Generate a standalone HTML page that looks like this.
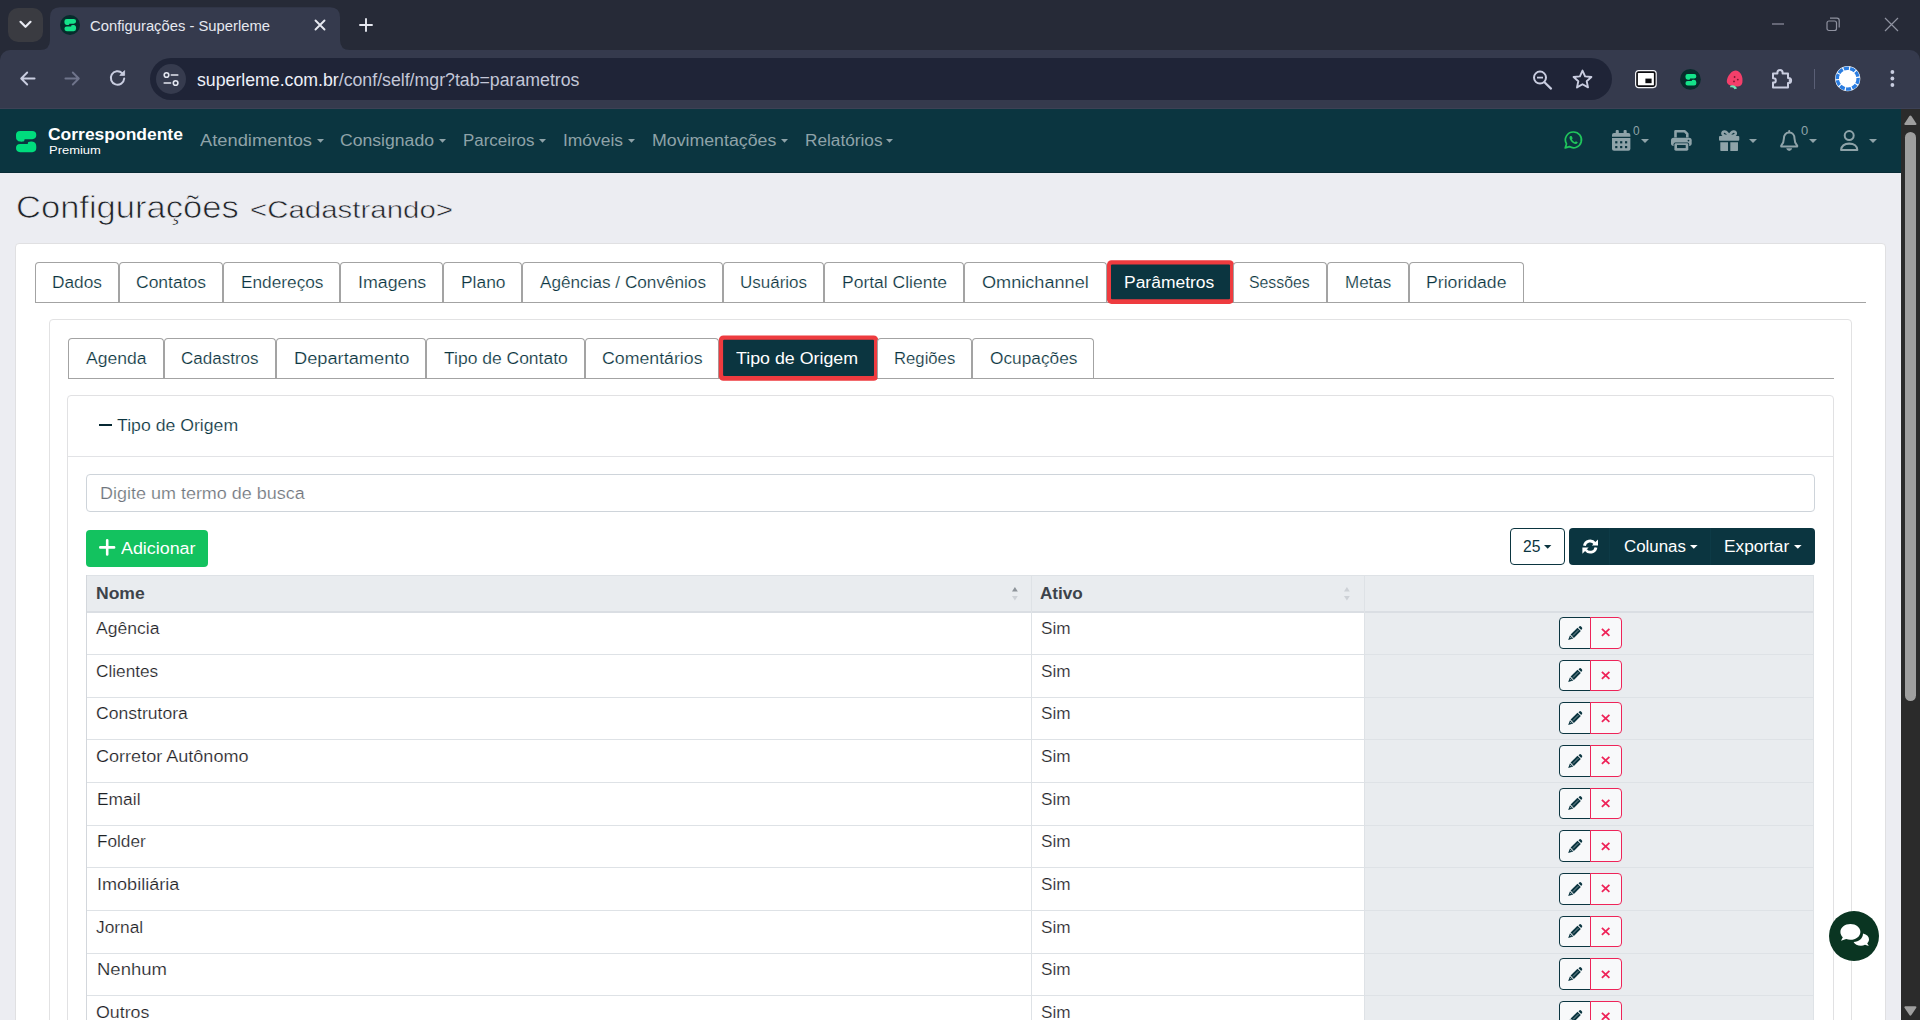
<!DOCTYPE html>
<html lang="pt-br"><head><meta charset="utf-8"><title>Configurações - Superleme</title>
<style>
*{box-sizing:border-box;margin:0;padding:0}
html,body{width:1920px;height:1020px;overflow:hidden;background:#ecedf2;font-family:"Liberation Sans",sans-serif;}
#root{position:relative;width:1920px;height:1020px;overflow:hidden}
.t{position:absolute;white-space:nowrap;line-height:1;transform-origin:0 0;display:block}
.a{position:absolute;display:block;overflow:visible}
</style></head>
<body><div id="root">
<div style="position:absolute;left:0px;top:0px;width:1920px;height:64px;background:#262a37"></div>
<div style="position:absolute;left:8px;top:8px;width:35px;height:34px;background:#3a3b41;border-radius:10px"></div>
<svg class="a" style="left:19px;top:20px" width="13" height="9" viewBox="0 0 13 9"><path d="M1.5 1.8 L6.5 6.8 L11.5 1.8" fill="none" stroke="#e8eaf2" stroke-width="2.2" stroke-linecap="round" stroke-linejoin="round"/></svg>
<div style="position:absolute;left:0px;top:50px;width:1920px;height:59px;background:#353a4d;border-radius:10px 10px 0 0"></div>
<div style="position:absolute;left:0px;top:108px;width:1920px;height:1px;background:#3d4256"></div>
<svg class="a" style="left:40px;top:7px" width="310" height="43" viewBox="0 0 310 43"><path d="M0 43 Q10 43 10 33 V10.3 Q10 0.3 20 0.3 H290 Q300 0.3 300 10.3 V33 Q300 43 310 43 Z" fill="#353a4d"/></svg>
<svg class="a" style="left:60px;top:15px" width="20" height="20" viewBox="0 0 20 20"><circle cx="10" cy="10" r="10" fill="#062c2c"/></svg>
<svg class="a" style="left:63.9px;top:19.1px" width="12.5" height="12.2" viewBox="0 0 20.3 21.2"><path d="M4.1 0 H16.2 A4.1 4.1 0 0 1 16.2 8.2 H8.6 L8.1 10.2 Q6.2 10.8 4.4 10.6 A5 5 0 0 1 0 5.4 V4.1 A4.1 4.1 0 0 1 4.1 0 Z" fill="#14e38a"/><path d="M4.1 0 H16.2 A4.1 4.1 0 0 1 16.2 8.2 H8.6 L8.1 10.2 Q6.2 10.8 4.4 10.6 A5 5 0 0 1 0 5.4 V4.1 A4.1 4.1 0 0 1 4.1 0 Z" fill="#14e38a" transform="rotate(180 10.15 10.6)"/></svg>
<span class="t " style="left:90.00px;top:18.00px;font-size:15.5px;color:#e6e8f0;transform:scaleX(0.9540)">Configurações - Superleme</span>
<svg class="a" style="left:314px;top:19px" width="12" height="12" viewBox="0 0 12 12"><path d="M1.5 1.5 L10.5 10.5 M10.5 1.5 L1.5 10.5" stroke="#e6e8f0" stroke-width="1.9" stroke-linecap="round"/></svg>
<svg class="a" style="left:359px;top:18px" width="14" height="14" viewBox="0 0 14 14"><path d="M7 1 V13 M1 7 H13" stroke="#e6e8f0" stroke-width="1.9" stroke-linecap="round"/></svg>
<svg class="a" style="left:1772px;top:23px" width="13" height="2" viewBox="0 0 13 2"><path d="M0 1 H12" stroke="#8f92a0" stroke-width="1.2"/></svg>
<svg class="a" style="left:1826px;top:17px" width="15" height="15" viewBox="0 0 15 15"><rect x="1" y="4" width="9.5" height="9.5" rx="2" fill="none" stroke="#8f92a0" stroke-width="1.2"/><path d="M4 1.2 H11 Q13.2 1.2 13.2 3.4 V10.5" fill="none" stroke="#8f92a0" stroke-width="1.2"/></svg>
<svg class="a" style="left:1884px;top:17px" width="15" height="15" viewBox="0 0 15 15"><path d="M1 1 L14 14 M14 1 L1 14" stroke="#8f92a0" stroke-width="1.2"/></svg>
<svg class="a" style="left:18px;top:69px" width="20" height="20" viewBox="0 0 20 20"><path d="M16.6 9.5 H3.4 M9.2 3.5 L3.2 9.5 L9.2 15.5" fill="none" stroke="#c9cde0" stroke-width="1.9" stroke-linecap="round" stroke-linejoin="round"/></svg>
<svg class="a" style="left:62px;top:69px" width="20" height="20" viewBox="0 0 20 20"><path d="M3.4 9.5 H16.6 M10.8 3.5 L16.8 9.5 L10.8 15.5" fill="none" stroke="#6f748b" stroke-width="1.9" stroke-linecap="round" stroke-linejoin="round"/></svg>
<svg class="a" style="left:108px;top:68px" width="20" height="20" viewBox="0 0 20 20"><path d="M16.2 10.5 A6.7 6.7 0 1 1 14.2 5.2" fill="none" stroke="#c9cde0" stroke-width="2" stroke-linecap="round"/><path d="M16.6 2.6 V7.4 H11.8 Z" fill="#c9cde0" stroke="#c9cde0" stroke-width="0.8" stroke-linejoin="round"/></svg>
<div style="position:absolute;left:150px;top:58px;width:1462px;height:42px;background:#1f2437;border-radius:21px"></div>
<div style="position:absolute;left:156px;top:64px;width:30px;height:30px;background:#363b4e;border-radius:15px"></div>
<svg class="a" style="left:161px;top:69px" width="20" height="20" viewBox="0 0 20 20"><circle cx="5.5" cy="6" r="2.3" fill="none" stroke="#e3e6f0" stroke-width="1.6"/><path d="M10.3 6 H16.8" stroke="#e3e6f0" stroke-width="1.6" stroke-linecap="round"/><circle cx="14.6" cy="14" r="2.3" fill="none" stroke="#e3e6f0" stroke-width="1.6"/><path d="M3.2 14 H9.6" stroke="#e3e6f0" stroke-width="1.6" stroke-linecap="round"/></svg>
<span class="t " style="left:196.90px;top:71.00px;font-size:18px;color:#eef0f7;transform:scaleX(0.9839)">superleme.com.br<span style="color:#c3c7d8">/conf/self/mgr?tab=parametros</span></span>
<svg class="a" style="left:1531px;top:69px" width="22" height="22" viewBox="0 0 22 22"><circle cx="9" cy="8.6" r="6" fill="none" stroke="#c9cde0" stroke-width="2"/><path d="M13.5 13.2 L20 19.6" stroke="#c9cde0" stroke-width="2.2" stroke-linecap="round"/><path d="M6 8.6 H12" stroke="#c9cde0" stroke-width="1.8"/></svg>
<svg class="a" style="left:1572px;top:69px" width="21" height="20" viewBox="0 0 21 20"><path d="M10.5 1.6 L13.1 7.4 L19.4 8 L14.7 12.2 L16 18.4 L10.5 15.2 L5 18.4 L6.3 12.2 L1.6 8 L7.9 7.4 Z" fill="none" stroke="#c9cde0" stroke-width="1.9" stroke-linejoin="round"/></svg>
<svg class="a" style="left:1634.6px;top:70.2px" width="22" height="18.4" viewBox="0 0 22 18.4"><rect x="0.6" y="0.6" width="20.6" height="17" rx="3" fill="#0c0c10" stroke="#f2f2f6" stroke-width="1.2"/><rect x="2.9" y="2.9" width="16" height="12.4" rx="0.6" fill="#ffffff"/><rect x="10.4" y="8.6" width="6.2" height="4.6" fill="#0c0c10"/></svg>
<svg class="a" style="left:1680px;top:68.6px" width="21" height="21" viewBox="0 0 21 21"><circle cx="10.4" cy="10.4" r="10.4" fill="#072b2b"/></svg>
<svg class="a" style="left:1684.6px;top:73.8px" width="11.8" height="11.4" viewBox="0 0 20.3 21.2"><path d="M4.1 0 H16.2 A4.1 4.1 0 0 1 16.2 8.2 H8.6 L8.1 10.2 Q6.2 10.8 4.4 10.6 A5 5 0 0 1 0 5.4 V4.1 A4.1 4.1 0 0 1 4.1 0 Z" fill="#14e38a"/><path d="M4.1 0 H16.2 A4.1 4.1 0 0 1 16.2 8.2 H8.6 L8.1 10.2 Q6.2 10.8 4.4 10.6 A5 5 0 0 1 0 5.4 V4.1 A4.1 4.1 0 0 1 4.1 0 Z" fill="#14e38a" transform="rotate(180 10.15 10.6)"/></svg>
<svg class="a" style="left:1726px;top:69.5px" width="18" height="20" viewBox="0 0 18 20"><path d="M10 0.6 C15 1.5 17.2 7 16.4 12.4 C16 15.6 13.6 16.6 11 16.4 L4.6 15.4 C1.2 14.6 0.2 12 1.2 9 C2.6 4.8 6 0.4 10 0.6 Z" fill="#f43f6a"/><path d="M4 16 C6 14.6 9.6 15 11 18.6 L8.4 19.2 C8 17.6 6.4 16.8 4.6 17.4 Z" fill="#6ee7b7"/><circle cx="8.6" cy="7" r="0.9" fill="#7a1730"/><circle cx="11.8" cy="9.6" r="0.9" fill="#7a1730"/><circle cx="8" cy="11.4" r="0.9" fill="#7a1730"/></svg>
<svg class="a" style="left:1771px;top:68px" width="22" height="21" viewBox="0 0 22 21"><path d="M2 5.6 H6.4 V4.6 A2.6 2.6 0 0 1 11.6 4.6 V5.6 H17 V10 H17.6 A2.5 2.5 0 0 1 17.6 15 H17 V19.4 H2 V14.6 H2.6 A2.2 2.2 0 0 0 2.6 10.2 H2 Z" fill="none" stroke="#c9cde0" stroke-width="2" stroke-linejoin="round"/><path d="M17.8 10.4 Q20.8 12.5 17.8 14.6 Z" fill="#c9cde0"/></svg>
<div style="position:absolute;left:1813.5px;top:69px;width:1.2px;height:19.5px;background:#5a5f76"></div>
<svg class="a" style="left:1834.5px;top:65.8px" width="26" height="26" viewBox="0 0 26 26"><circle cx="12.7" cy="12.7" r="12.6" fill="#ffffff"/><circle cx="12.7" cy="12.7" r="10.4" fill="none" stroke="#2a7de1" stroke-width="3.4" stroke-dasharray="5.2 1.2"/><circle cx="12.7" cy="12.7" r="8.2" fill="#ffffff"/></svg>
<svg class="a" style="left:1889px;top:69px" width="7" height="19" viewBox="0 0 7 19"><circle cx="3.4" cy="3" r="1.9" fill="#c9cde0"/><circle cx="3.4" cy="9.5" r="1.9" fill="#c9cde0"/><circle cx="3.4" cy="16" r="1.9" fill="#c9cde0"/></svg>
<div style="position:absolute;left:0px;top:109px;width:1901px;height:64px;background:#0b3540"></div>
<div style="position:absolute;left:0px;top:172px;width:1901px;height:1px;background:#082c36"></div>
<svg class="a" style="left:15.9px;top:130.8px" width="20.3" height="21.2" viewBox="0 0 20.3 21.2"><path d="M4.1 0 H16.2 A4.1 4.1 0 0 1 16.2 8.2 H8.6 L8.1 10.2 Q6.2 10.8 4.4 10.6 A5 5 0 0 1 0 5.4 V4.1 A4.1 4.1 0 0 1 4.1 0 Z" fill="#00dc7d"/><path d="M4.1 0 H16.2 A4.1 4.1 0 0 1 16.2 8.2 H8.6 L8.1 10.2 Q6.2 10.8 4.4 10.6 A5 5 0 0 1 0 5.4 V4.1 A4.1 4.1 0 0 1 4.1 0 Z" fill="#00dc7d" transform="rotate(180 10.15 10.6)"/></svg>
<span class="t " style="left:48.30px;top:126.00px;font-size:17px;color:#ffffff;font-weight:700;transform:scaleX(1.0275)">Correspondente</span>
<span class="t " style="left:48.50px;top:145.00px;font-size:10.8px;color:#ffffff;transform:scaleX(1.1989)">Premium</span>
<span class="t " style="left:200.00px;top:133.00px;font-size:16px;color:#8fa3a9;transform:scaleX(1.1447)">Atendimentos</span>
<svg class="a" style="left:317px;top:139.3px" width="7" height="3.7" viewBox="0 0 7 3.7"><path d="M0 0H7L3.5 3.7Z" fill="#8fa3a9"/></svg>
<span class="t " style="left:340.00px;top:133.00px;font-size:16px;color:#8fa3a9;transform:scaleX(1.1007)">Consignado</span>
<svg class="a" style="left:438.75px;top:139.3px" width="7" height="3.7" viewBox="0 0 7 3.7"><path d="M0 0H7L3.5 3.7Z" fill="#8fa3a9"/></svg>
<span class="t " style="left:463.00px;top:133.00px;font-size:16px;color:#8fa3a9;transform:scaleX(1.0581)">Parceiros</span>
<svg class="a" style="left:538.75px;top:139.3px" width="7" height="3.7" viewBox="0 0 7 3.7"><path d="M0 0H7L3.5 3.7Z" fill="#8fa3a9"/></svg>
<span class="t " style="left:563.00px;top:133.00px;font-size:16px;color:#8fa3a9;transform:scaleX(1.0884)">Imóveis</span>
<svg class="a" style="left:627.5px;top:139.3px" width="7" height="3.7" viewBox="0 0 7 3.7"><path d="M0 0H7L3.5 3.7Z" fill="#8fa3a9"/></svg>
<span class="t " style="left:651.75px;top:133.00px;font-size:16px;color:#8fa3a9;transform:scaleX(1.1089)">Movimentações</span>
<svg class="a" style="left:780.5px;top:139.3px" width="7" height="3.7" viewBox="0 0 7 3.7"><path d="M0 0H7L3.5 3.7Z" fill="#8fa3a9"/></svg>
<span class="t " style="left:804.50px;top:133.00px;font-size:16px;color:#8fa3a9;transform:scaleX(1.0759)">Relatórios</span>
<svg class="a" style="left:886px;top:139.3px" width="7" height="3.7" viewBox="0 0 7 3.7"><path d="M0 0H7L3.5 3.7Z" fill="#8fa3a9"/></svg>
<svg class="a" style="left:1564px;top:131.4px" width="18.4" height="18.2" viewBox="0 0 18.4 18.2"><path d="M9.5 1 A7.9 7.9 0 1 1 5.4 15.6 L1.2 16.9 L2.5 12.9 A7.9 7.9 0 0 1 9.5 1 Z" fill="none" stroke="#20c65c" stroke-width="1.7" stroke-linejoin="round"/><path d="M6.3 4.9 C5.2 5.6 5.2 7.4 6.6 9.4 C8 11.5 10.2 13 11.9 12.9 C13 12.8 13.8 12 13.7 11.3 L11.9 10.3 L10.9 11.2 C9.7 10.8 8.4 9.5 7.9 8.3 L8.7 7.3 L7.6 5 Z" fill="#20c65c"/></svg>
<svg class="a" style="left:1612px;top:130.2px" width="18.4" height="20.7" viewBox="0 0 18.4 20.7"><rect x="3.7" y="0" width="3.1" height="4.2" rx="1" fill="#8fa3a9"/><rect x="11.6" y="0" width="3.1" height="4.2" rx="1" fill="#8fa3a9"/><path d="M0 6.7 V5.1 Q0 3.1 2 3.1 H16.4 Q18.4 3.1 18.4 5.1 V6.7 Z" fill="#8fa3a9"/><path d="M0 7.9 H18.4 V18.7 Q18.4 20.7 16.4 20.7 H2 Q0 20.7 0 18.7 Z" fill="#8fa3a9"/><rect x="3.2" y="11.2" width="2.2" height="2.2" fill="#0b3540"/><rect x="3.2" y="16" width="2.2" height="2.2" fill="#0b3540"/><rect x="8.1" y="11.2" width="2.2" height="2.2" fill="#0b3540"/><rect x="8.1" y="16" width="2.2" height="2.2" fill="#0b3540"/><rect x="13" y="11.2" width="2.2" height="2.2" fill="#0b3540"/><rect x="13" y="16" width="2.2" height="2.2" fill="#0b3540"/></svg>
<span class="t " style="left:1633.20px;top:125.00px;font-size:12px;color:#8fa3a9;transform:scaleX(0.9892)">0</span>
<svg class="a" style="left:1641px;top:139px" width="8" height="4" viewBox="0 0 8 4"><path d="M0 0H8L4.0 4Z" fill="#8fa3a9"/></svg>
<svg class="a" style="left:1670.6px;top:130.2px" width="20.7" height="20.7" viewBox="0 0 20.7 20.7"><path d="M4.5 7.4 V1.3 H13.8 L16.3 3.8 V7.4" fill="none" stroke="#8fa3a9" stroke-width="2.6" stroke-linejoin="round"/><rect x="0" y="7.7" width="20.7" height="8.2" rx="2.6" fill="#8fa3a9"/><rect x="2.6" y="12.6" width="15.5" height="8.1" rx="1.6" fill="#0b3540"/><rect x="3.4" y="13.3" width="13.9" height="7.4" rx="1.4" fill="#8fa3a9"/><rect x="6" y="15" width="8.7" height="3.1" fill="#0b3540"/><circle cx="17.5" cy="10.6" r="0.9" fill="#0b3540"/></svg>
<svg class="a" style="left:1718.9px;top:129.8px" width="20.3" height="21.1" viewBox="0 0 20.3 21.1"><path d="M10.1 6.2 C7.8 0.2 3 0.6 3.4 3.8 C3.7 5.8 6.6 6.2 10.1 6.2 C13.6 6.2 16.5 5.8 16.8 3.8 C17.2 0.6 12.4 0.2 10.1 6.2 Z" fill="none" stroke="#8fa3a9" stroke-width="2.5" stroke-linejoin="round"/><rect x="0" y="6.1" width="20.3" height="4.7" rx="1" fill="#8fa3a9"/><path d="M1.3 12.2 H9 V21.1 H2.5 Q1.3 21.1 1.3 19.9 Z" fill="#8fa3a9"/><path d="M11.3 12.2 H19 V19.9 Q19 21.1 17.8 21.1 H11.3 Z" fill="#8fa3a9"/></svg>
<svg class="a" style="left:1749px;top:139px" width="8" height="4" viewBox="0 0 8 4"><path d="M0 0H8L4.0 4Z" fill="#8fa3a9"/></svg>
<svg class="a" style="left:1780px;top:129.8px" width="18.4" height="21.2" viewBox="0 0 18.4 21.2"><path d="M9.2 1 V2.6 M9.2 2.6 C5.6 2.6 3.9 5.4 3.9 8.4 C3.9 12.4 2.6 14 1.2 15.6 V16.6 H17.2 V15.6 C15.8 14 14.5 12.4 14.5 8.4 C14.5 5.4 12.8 2.6 9.2 2.6 Z" fill="none" stroke="#8fa3a9" stroke-width="2" stroke-linejoin="round" stroke-linecap="round"/><path d="M6.2 18.3 H12.2 Q11.6 21 9.2 21 Q6.8 21 6.2 18.3 Z" fill="#8fa3a9"/></svg>
<span class="t " style="left:1800.90px;top:125.00px;font-size:12px;color:#8fa3a9;transform:scaleX(1.0791)">0</span>
<svg class="a" style="left:1809px;top:139px" width="8" height="4" viewBox="0 0 8 4"><path d="M0 0H8L4.0 4Z" fill="#8fa3a9"/></svg>
<svg class="a" style="left:1840px;top:129.8px" width="18.4" height="21.1" viewBox="0 0 18.4 21.1"><circle cx="9.2" cy="5.6" r="4.5" fill="none" stroke="#8fa3a9" stroke-width="2"/><path d="M1.1 20 C1.1 16 4.4 13.6 9.2 13.6 C14 13.6 17.3 16 17.3 20 Z" fill="none" stroke="#8fa3a9" stroke-width="2.1" stroke-linejoin="round"/></svg>
<svg class="a" style="left:1869px;top:139px" width="8" height="4" viewBox="0 0 8 4"><path d="M0 0H8L4.0 4Z" fill="#8fa3a9"/></svg>
<div style="position:absolute;left:1901px;top:109px;width:19px;height:911px;background:#2b2b2b"></div>
<svg class="a" style="left:1904px;top:114.6px" width="13" height="10.2" viewBox="0 0 13 10.2"><path d="M6.4 0.5 Q6.9 0.5 7.4 1.1 L12.3 8.4 Q12.9 10 11.4 10 H1.4 Q-0.1 10 0.5 8.4 L5.4 1.1 Q5.9 0.5 6.4 0.5 Z" fill="#9f9f9f"/></svg>
<div style="position:absolute;left:1905px;top:131.7px;width:11px;height:569.6px;background:#9f9f9f;border-radius:5.5px"></div>
<svg class="a" style="left:1904px;top:1006.1px" width="13" height="10.2" viewBox="0 0 13 10.2"><path d="M6.4 9.7 Q6.9 9.7 7.4 9.1 L12.3 1.8 Q12.9 0.2 11.4 0.2 H1.4 Q-0.1 0.2 0.5 1.8 L5.4 9.1 Q5.9 9.7 6.4 9.7 Z" fill="#9f9f9f"/></svg>
<span class="t " style="left:16.30px;top:192.00px;font-size:31.5px;color:#1f2328;-webkit-text-stroke:0.75px #ecedf2;transform:scaleX(1.0964)">Configurações</span>
<span class="t " style="left:250.00px;top:199.00px;font-size:23.6px;color:#1f2328;-webkit-text-stroke:0.5px #ecedf2;transform:scaleX(1.2477)">&lt;Cadastrando&gt;</span>
<div style="position:absolute;left:15px;top:243px;width:1871px;height:800px;background:#fff;border:1px solid #e0e0e2;border-radius:4px"></div>
<div style="position:absolute;left:35px;top:302px;width:1831px;height:1px;background:#a3a3a3"></div>
<div style="position:absolute;left:35px;top:262px;width:84px;height:40px;border:1px solid #a3a3a3;border-bottom:none;border-radius:4px 4px 0 0;background:#fff"></div>
<span class="t " style="left:52.00px;top:275.00px;font-size:16px;color:#0b3540;-webkit-text-stroke:0.2px #fff;transform:scaleX(1.0811)">Dados</span>
<div style="position:absolute;left:119px;top:262px;width:104px;height:40px;border:1px solid #a3a3a3;border-bottom:none;border-radius:4px 4px 0 0;background:#fff"></div>
<span class="t " style="left:136.00px;top:275.00px;font-size:16px;color:#0b3540;-webkit-text-stroke:0.2px #fff;transform:scaleX(1.0931)">Contatos</span>
<div style="position:absolute;left:223px;top:262px;width:117px;height:40px;border:1px solid #a3a3a3;border-bottom:none;border-radius:4px 4px 0 0;background:#fff"></div>
<span class="t " style="left:240.50px;top:275.00px;font-size:16px;color:#0b3540;-webkit-text-stroke:0.2px #fff;transform:scaleX(1.0785)">Endereços</span>
<div style="position:absolute;left:340px;top:262px;width:103px;height:40px;border:1px solid #a3a3a3;border-bottom:none;border-radius:4px 4px 0 0;background:#fff"></div>
<span class="t " style="left:357.50px;top:275.00px;font-size:16px;color:#0b3540;-webkit-text-stroke:0.2px #fff;transform:scaleX(1.1121)">Imagens</span>
<div style="position:absolute;left:443px;top:262px;width:79px;height:40px;border:1px solid #a3a3a3;border-bottom:none;border-radius:4px 4px 0 0;background:#fff"></div>
<span class="t " style="left:460.50px;top:275.00px;font-size:16px;color:#0b3540;-webkit-text-stroke:0.2px #fff;transform:scaleX(1.0875)">Plano</span>
<div style="position:absolute;left:522px;top:262px;width:201px;height:40px;border:1px solid #a3a3a3;border-bottom:none;border-radius:4px 4px 0 0;background:#fff"></div>
<span class="t " style="left:539.50px;top:275.00px;font-size:16px;color:#0b3540;-webkit-text-stroke:0.2px #fff;transform:scaleX(1.0726)">Agências / Convênios</span>
<div style="position:absolute;left:723px;top:262px;width:101px;height:40px;border:1px solid #a3a3a3;border-bottom:none;border-radius:4px 4px 0 0;background:#fff"></div>
<span class="t " style="left:740.00px;top:275.00px;font-size:16px;color:#0b3540;-webkit-text-stroke:0.2px #fff;transform:scaleX(1.0612)">Usuários</span>
<div style="position:absolute;left:824px;top:262px;width:140px;height:40px;border:1px solid #a3a3a3;border-bottom:none;border-radius:4px 4px 0 0;background:#fff"></div>
<span class="t " style="left:842.00px;top:275.00px;font-size:16px;color:#0b3540;-webkit-text-stroke:0.2px #fff;transform:scaleX(1.0932)">Portal Cliente</span>
<div style="position:absolute;left:964px;top:262px;width:143px;height:40px;border:1px solid #a3a3a3;border-bottom:none;border-radius:4px 4px 0 0;background:#fff"></div>
<span class="t " style="left:982.00px;top:275.00px;font-size:16px;color:#0b3540;-webkit-text-stroke:0.2px #fff;transform:scaleX(1.1324)">Omnichannel</span>
<svg class="a" style="left:1105px;top:258px" width="133" height="49"><rect x="2.00" y="2.20" width="127" height="43.7" rx="4.5" fill="#ee3b3f"/><rect x="6.00" y="6.50" width="119" height="34.8" rx="1" fill="#0b3540"/></svg>
<span class="t " style="left:1124.25px;top:275.00px;font-size:16px;color:#ffffff;transform:scaleX(1.0913)">Parâmetros</span>
<div style="position:absolute;left:1233px;top:262px;width:94px;height:40px;border:1px solid #a3a3a3;border-bottom:none;border-radius:4px 4px 0 0;background:#fff"></div>
<span class="t " style="left:1249.25px;top:275.00px;font-size:16px;color:#0b3540;-webkit-text-stroke:0.2px #fff;transform:scaleX(0.9899)">Sessões</span>
<div style="position:absolute;left:1327px;top:262px;width:82px;height:40px;border:1px solid #a3a3a3;border-bottom:none;border-radius:4px 4px 0 0;background:#fff"></div>
<span class="t " style="left:1345.00px;top:275.00px;font-size:16px;color:#0b3540;-webkit-text-stroke:0.2px #fff;transform:scaleX(1.0616)">Metas</span>
<div style="position:absolute;left:1409px;top:262px;width:115px;height:40px;border:1px solid #a3a3a3;border-bottom:none;border-radius:4px 4px 0 0;background:#fff"></div>
<span class="t " style="left:1426.25px;top:275.00px;font-size:16px;color:#0b3540;-webkit-text-stroke:0.2px #fff;transform:scaleX(1.1038)">Prioridade</span>
<div style="position:absolute;left:49px;top:319px;width:1803px;height:720px;background:#fff;border:1px solid #e2e2e3;border-radius:4px"></div>
<div style="position:absolute;left:68px;top:378px;width:1766px;height:1px;background:#a3a3a3"></div>
<div style="position:absolute;left:68px;top:338px;width:96px;height:40px;border:1px solid #a3a3a3;border-bottom:none;border-radius:4px 4px 0 0;background:#fff"></div>
<span class="t " style="left:85.75px;top:351.00px;font-size:16px;color:#0b3540;-webkit-text-stroke:0.2px #fff;transform:scaleX(1.0967)">Agenda</span>
<div style="position:absolute;left:164px;top:338px;width:112px;height:40px;border:1px solid #a3a3a3;border-bottom:none;border-radius:4px 4px 0 0;background:#fff"></div>
<span class="t " style="left:181.25px;top:351.00px;font-size:16px;color:#0b3540;-webkit-text-stroke:0.2px #fff;transform:scaleX(1.0628)">Cadastros</span>
<div style="position:absolute;left:276px;top:338px;width:150px;height:40px;border:1px solid #a3a3a3;border-bottom:none;border-radius:4px 4px 0 0;background:#fff"></div>
<span class="t " style="left:293.75px;top:351.00px;font-size:16px;color:#0b3540;-webkit-text-stroke:0.2px #fff;transform:scaleX(1.1391)">Departamento</span>
<div style="position:absolute;left:426px;top:338px;width:159px;height:40px;border:1px solid #a3a3a3;border-bottom:none;border-radius:4px 4px 0 0;background:#fff"></div>
<span class="t " style="left:443.75px;top:351.00px;font-size:16px;color:#0b3540;-webkit-text-stroke:0.2px #fff;transform:scaleX(1.0927)">Tipo de Contato</span>
<div style="position:absolute;left:585px;top:338px;width:134px;height:40px;border:1px solid #a3a3a3;border-bottom:none;border-radius:4px 4px 0 0;background:#fff"></div>
<span class="t " style="left:602.00px;top:351.00px;font-size:16px;color:#0b3540;-webkit-text-stroke:0.2px #fff;transform:scaleX(1.1080)">Comentários</span>
<svg class="a" style="left:716px;top:333px" width="165" height="51"><rect x="2.85" y="2.40" width="159.35" height="45.3" rx="4.5" fill="#ee3b3f"/><rect x="7.10" y="6.85" width="150.9" height="36.15" rx="1" fill="#0b3540"/></svg>
<span class="t " style="left:736.20px;top:351.00px;font-size:16px;color:#ffffff;transform:scaleX(1.1124)">Tipo de Origem</span>
<div style="position:absolute;left:877px;top:338px;width:95px;height:40px;border:1px solid #a3a3a3;border-bottom:none;border-radius:4px 4px 0 0;background:#fff"></div>
<span class="t " style="left:893.75px;top:351.00px;font-size:16px;color:#0b3540;-webkit-text-stroke:0.2px #fff;transform:scaleX(1.0434)">Regiões</span>
<div style="position:absolute;left:972px;top:338px;width:122px;height:40px;border:1px solid #a3a3a3;border-bottom:none;border-radius:4px 4px 0 0;background:#fff"></div>
<span class="t " style="left:990.00px;top:351.00px;font-size:16px;color:#0b3540;-webkit-text-stroke:0.2px #fff;transform:scaleX(1.0811)">Ocupações</span>
<div style="position:absolute;left:67px;top:395px;width:1767px;height:640px;background:#fff;border:1px solid #e1e1e3;border-radius:4px"></div>
<div style="position:absolute;left:99px;top:424px;width:13px;height:2px;background:#062832"></div>
<span class="t " style="left:117.00px;top:417.00px;font-size:16.4px;color:#0b3540;-webkit-text-stroke:0.2px #fff;transform:scaleX(1.0786)">Tipo de Origem</span>
<div style="position:absolute;left:68px;top:456px;width:1765px;height:1px;background:#e2e3e6"></div>
<div style="position:absolute;left:86px;top:474px;width:1729px;height:38px;background:#fff;border:1px solid #ced4da;border-radius:4px"></div>
<span class="t " style="left:99.50px;top:486.00px;font-size:16px;color:#6f757c;-webkit-text-stroke:0.2px #fff;transform:scaleX(1.1231)">Digite um termo de busca</span>
<div style="position:absolute;left:86px;top:530px;width:122px;height:37px;background:#13c25f;border-radius:4px"></div>
<svg class="a" style="left:98.7px;top:538.8px" width="16.4" height="16.8" viewBox="0 0 16.4 16.8"><path d="M8.2 1.3 V15.5 M1.3 8.4 H15.1" stroke="#fff" stroke-width="2.6" stroke-linecap="round"/></svg>
<span class="t " style="left:120.50px;top:541.00px;font-size:16px;color:#ffffff;transform:scaleX(1.1169)">Adicionar</span>
<div style="position:absolute;left:1510px;top:528px;width:55px;height:37px;background:#fff;border:1px solid #0b3540;border-radius:4px"></div>
<span class="t " style="left:1523.00px;top:539.00px;font-size:16px;color:#0b3540;transform:scaleX(0.9775)">25</span>
<svg class="a" style="left:1544.3px;top:544.5px" width="7.4" height="3.7" viewBox="0 0 7.4 3.7"><path d="M0 0H7.4L3.7 3.7Z" fill="#0b3540"/></svg>
<div style="position:absolute;left:1569px;top:528px;width:246px;height:37px;background:#0b3540;border-radius:4px"></div>
<div style="position:absolute;left:1609px;top:528px;width:1px;height:37px;background:#0d3a46"></div>
<div style="position:absolute;left:1710px;top:528px;width:1px;height:37px;background:#0d3a46"></div>
<svg class="a" style="left:1582px;top:538.5px" width="16.4" height="15.2" viewBox="0 0 16.4 15.2"><path d="M2.4 6.8 A5.8 5.8 0 0 1 12.8 4.4" fill="none" stroke="#fff" stroke-width="2.8"/><path d="M16 0.4 V6.6 H9.8 Z" fill="#fff"/><path d="M14 8.4 A5.8 5.8 0 0 1 3.6 10.8" fill="none" stroke="#fff" stroke-width="2.8"/><path d="M0.4 14.8 V8.6 H6.6 Z" fill="#fff"/></svg>
<span class="t " style="left:1623.90px;top:539.00px;font-size:16px;color:#ffffff;transform:scaleX(1.0544)">Colunas</span>
<svg class="a" style="left:1690.4px;top:544.5px" width="7.6" height="3.8" viewBox="0 0 7.6 3.8"><path d="M0 0H7.6L3.8 3.8Z" fill="#fff"/></svg>
<span class="t " style="left:1723.80px;top:539.00px;font-size:16px;color:#ffffff;transform:scaleX(1.0782)">Exportar</span>
<svg class="a" style="left:1794.3px;top:544.5px" width="7.6" height="3.8" viewBox="0 0 7.6 3.8"><path d="M0 0H7.6L3.8 3.8Z" fill="#fff"/></svg>
<div style="position:absolute;left:86.2px;top:575px;width:1728.2px;height:37.4px;background:#e9ecef"></div>
<div style="position:absolute;left:1364.6px;top:575px;width:449.8000000000002px;height:460px;background:#e9ecef"></div>
<div style="position:absolute;left:86.2px;top:574.8px;width:1728.2px;height:1.4px;background:#dee2e6"></div>
<div style="position:absolute;left:86.2px;top:611.3px;width:1728.2px;height:1.7px;background:#dadee3"></div>
<div style="position:absolute;left:86.2px;top:654.0970000000001px;width:1728.2px;height:1px;background:#dee2e6"></div>
<div style="position:absolute;left:86.2px;top:696.764px;width:1728.2px;height:1px;background:#dee2e6"></div>
<div style="position:absolute;left:86.2px;top:739.431px;width:1728.2px;height:1px;background:#dee2e6"></div>
<div style="position:absolute;left:86.2px;top:782.0980000000001px;width:1728.2px;height:1px;background:#dee2e6"></div>
<div style="position:absolute;left:86.2px;top:824.7650000000001px;width:1728.2px;height:1px;background:#dee2e6"></div>
<div style="position:absolute;left:86.2px;top:867.4320000000001px;width:1728.2px;height:1px;background:#dee2e6"></div>
<div style="position:absolute;left:86.2px;top:910.099px;width:1728.2px;height:1px;background:#dee2e6"></div>
<div style="position:absolute;left:86.2px;top:952.7660000000001px;width:1728.2px;height:1px;background:#dee2e6"></div>
<div style="position:absolute;left:86.2px;top:995.4330000000001px;width:1728.2px;height:1px;background:#dee2e6"></div>
<div style="position:absolute;left:86.2px;top:575px;width:1.3px;height:460px;background:#d3d7dc"></div>
<div style="position:absolute;left:1031px;top:575px;width:1px;height:460px;background:#dee2e6"></div>
<div style="position:absolute;left:1364.1px;top:575px;width:1.4px;height:460px;background:#dee2e6"></div>
<div style="position:absolute;left:1813.4px;top:575px;width:1px;height:460px;background:#dee2e6"></div>
<span class="t " style="left:96.30px;top:586.00px;font-size:16px;color:#3d434a;font-weight:700;transform:scaleX(1.0955)">Nome</span>
<span class="t " style="left:1040.00px;top:586.00px;font-size:16px;color:#3d434a;font-weight:700;transform:scaleX(1.0700)">Ativo</span>
<svg class="a" style="left:1012px;top:586.6px" width="5.8" height="13.8" viewBox="0 0 5.8 13.8"><path d="M0 4.6 L2.9 0 L5.8 4.6 Z" fill="#8d9399"/><path d="M0 9 L2.9 13.6 L5.8 9 Z" fill="#cdd1d6"/></svg>
<svg class="a" style="left:1344.2px;top:586.6px" width="5.8" height="13.8" viewBox="0 0 5.8 13.8"><path d="M0 4.6 L2.9 0 L5.8 4.6 Z" fill="#cdd1d6"/><path d="M0 9 L2.9 13.6 L5.8 9 Z" fill="#cdd1d6"/></svg>
<span class="t " style="left:96.20px;top:621.00px;font-size:16px;color:#1e2226;-webkit-text-stroke:0.2px #fff;transform:scaleX(1.0964)">Agência</span>
<span class="t " style="left:1040.80px;top:621.00px;font-size:16px;color:#1e2226;-webkit-text-stroke:0.2px #fff;transform:scaleX(1.0743)">Sim</span>
<div style="position:absolute;left:1559.1px;top:617.0px;width:31.6px;height:31.6px;background:#f8f9fa;border:1px solid #0b3540;border-radius:4px 0 0 4px"></div>
<div style="position:absolute;left:1590px;top:617.0px;width:31.9px;height:31.6px;background:#f8f9fa;border:1px solid #ee2459;border-radius:0 4px 4px 0"></div>
<svg class="a" style="left:1567.7px;top:625.8px" width="14.6" height="14" viewBox="0 0 14.6 14"><path d="M2.6 8.6 L9.5 1.7 L12.8 5 L5.9 11.9 Z" fill="#0b3540"/><path d="M4.9 9.6 L10.4 4.1" stroke="#c9d6d9" stroke-width="0.6"/><path d="M10.5 1.2 L11.6 0.3 Q12.4 -0.2 13.1 0.5 L14 1.4 Q14.6 2.1 14 2.9 L13.2 3.9 Z" fill="#0b3540"/><path d="M2 9.2 L5.3 12.5 L0.2 14 Z" fill="#0b3540"/><path d="M2.2 11 L3.4 12.2" stroke="#dfe8ea" stroke-width="0.7"/></svg>
<svg class="a" style="left:1601px;top:628.2px" width="9.3" height="8.8" viewBox="0 0 9.3 8.8"><path d="M0.9 0.9 L8.4 7.9 M8.4 0.9 L0.9 7.9" stroke="#ee2459" stroke-width="1.8" stroke-linecap="butt"/></svg>
<span class="t " style="left:96.20px;top:664.00px;font-size:16px;color:#1e2226;-webkit-text-stroke:0.2px #fff;transform:scaleX(1.0760)">Clientes</span>
<span class="t " style="left:1040.80px;top:664.00px;font-size:16px;color:#1e2226;-webkit-text-stroke:0.2px #fff;transform:scaleX(1.0743)">Sim</span>
<div style="position:absolute;left:1559.1px;top:659.667px;width:31.6px;height:31.6px;background:#f8f9fa;border:1px solid #0b3540;border-radius:4px 0 0 4px"></div>
<div style="position:absolute;left:1590px;top:659.667px;width:31.9px;height:31.6px;background:#f8f9fa;border:1px solid #ee2459;border-radius:0 4px 4px 0"></div>
<svg class="a" style="left:1567.7px;top:668.467px" width="14.6" height="14" viewBox="0 0 14.6 14"><path d="M2.6 8.6 L9.5 1.7 L12.8 5 L5.9 11.9 Z" fill="#0b3540"/><path d="M4.9 9.6 L10.4 4.1" stroke="#c9d6d9" stroke-width="0.6"/><path d="M10.5 1.2 L11.6 0.3 Q12.4 -0.2 13.1 0.5 L14 1.4 Q14.6 2.1 14 2.9 L13.2 3.9 Z" fill="#0b3540"/><path d="M2 9.2 L5.3 12.5 L0.2 14 Z" fill="#0b3540"/><path d="M2.2 11 L3.4 12.2" stroke="#dfe8ea" stroke-width="0.7"/></svg>
<svg class="a" style="left:1601px;top:670.8670000000001px" width="9.3" height="8.8" viewBox="0 0 9.3 8.8"><path d="M0.9 0.9 L8.4 7.9 M8.4 0.9 L0.9 7.9" stroke="#ee2459" stroke-width="1.8" stroke-linecap="butt"/></svg>
<span class="t " style="left:96.20px;top:706.00px;font-size:16px;color:#1e2226;-webkit-text-stroke:0.2px #fff;transform:scaleX(1.0981)">Construtora</span>
<span class="t " style="left:1040.80px;top:706.00px;font-size:16px;color:#1e2226;-webkit-text-stroke:0.2px #fff;transform:scaleX(1.0743)">Sim</span>
<div style="position:absolute;left:1559.1px;top:702.3340000000001px;width:31.6px;height:31.6px;background:#f8f9fa;border:1px solid #0b3540;border-radius:4px 0 0 4px"></div>
<div style="position:absolute;left:1590px;top:702.3340000000001px;width:31.9px;height:31.6px;background:#f8f9fa;border:1px solid #ee2459;border-radius:0 4px 4px 0"></div>
<svg class="a" style="left:1567.7px;top:711.134px" width="14.6" height="14" viewBox="0 0 14.6 14"><path d="M2.6 8.6 L9.5 1.7 L12.8 5 L5.9 11.9 Z" fill="#0b3540"/><path d="M4.9 9.6 L10.4 4.1" stroke="#c9d6d9" stroke-width="0.6"/><path d="M10.5 1.2 L11.6 0.3 Q12.4 -0.2 13.1 0.5 L14 1.4 Q14.6 2.1 14 2.9 L13.2 3.9 Z" fill="#0b3540"/><path d="M2 9.2 L5.3 12.5 L0.2 14 Z" fill="#0b3540"/><path d="M2.2 11 L3.4 12.2" stroke="#dfe8ea" stroke-width="0.7"/></svg>
<svg class="a" style="left:1601px;top:713.5340000000001px" width="9.3" height="8.8" viewBox="0 0 9.3 8.8"><path d="M0.9 0.9 L8.4 7.9 M8.4 0.9 L0.9 7.9" stroke="#ee2459" stroke-width="1.8" stroke-linecap="butt"/></svg>
<span class="t " style="left:96.20px;top:749.00px;font-size:16px;color:#1e2226;-webkit-text-stroke:0.2px #fff;transform:scaleX(1.1281)">Corretor Autônomo</span>
<span class="t " style="left:1040.80px;top:749.00px;font-size:16px;color:#1e2226;-webkit-text-stroke:0.2px #fff;transform:scaleX(1.0743)">Sim</span>
<div style="position:absolute;left:1559.1px;top:745.001px;width:31.6px;height:31.6px;background:#f8f9fa;border:1px solid #0b3540;border-radius:4px 0 0 4px"></div>
<div style="position:absolute;left:1590px;top:745.001px;width:31.9px;height:31.6px;background:#f8f9fa;border:1px solid #ee2459;border-radius:0 4px 4px 0"></div>
<svg class="a" style="left:1567.7px;top:753.8009999999999px" width="14.6" height="14" viewBox="0 0 14.6 14"><path d="M2.6 8.6 L9.5 1.7 L12.8 5 L5.9 11.9 Z" fill="#0b3540"/><path d="M4.9 9.6 L10.4 4.1" stroke="#c9d6d9" stroke-width="0.6"/><path d="M10.5 1.2 L11.6 0.3 Q12.4 -0.2 13.1 0.5 L14 1.4 Q14.6 2.1 14 2.9 L13.2 3.9 Z" fill="#0b3540"/><path d="M2 9.2 L5.3 12.5 L0.2 14 Z" fill="#0b3540"/><path d="M2.2 11 L3.4 12.2" stroke="#dfe8ea" stroke-width="0.7"/></svg>
<svg class="a" style="left:1601px;top:756.201px" width="9.3" height="8.8" viewBox="0 0 9.3 8.8"><path d="M0.9 0.9 L8.4 7.9 M8.4 0.9 L0.9 7.9" stroke="#ee2459" stroke-width="1.8" stroke-linecap="butt"/></svg>
<span class="t " style="left:96.50px;top:792.00px;font-size:16px;color:#1e2226;-webkit-text-stroke:0.2px #fff;transform:scaleX(1.0873)">Email</span>
<span class="t " style="left:1040.80px;top:792.00px;font-size:16px;color:#1e2226;-webkit-text-stroke:0.2px #fff;transform:scaleX(1.0743)">Sim</span>
<div style="position:absolute;left:1559.1px;top:787.668px;width:31.6px;height:31.6px;background:#f8f9fa;border:1px solid #0b3540;border-radius:4px 0 0 4px"></div>
<div style="position:absolute;left:1590px;top:787.668px;width:31.9px;height:31.6px;background:#f8f9fa;border:1px solid #ee2459;border-radius:0 4px 4px 0"></div>
<svg class="a" style="left:1567.7px;top:796.468px" width="14.6" height="14" viewBox="0 0 14.6 14"><path d="M2.6 8.6 L9.5 1.7 L12.8 5 L5.9 11.9 Z" fill="#0b3540"/><path d="M4.9 9.6 L10.4 4.1" stroke="#c9d6d9" stroke-width="0.6"/><path d="M10.5 1.2 L11.6 0.3 Q12.4 -0.2 13.1 0.5 L14 1.4 Q14.6 2.1 14 2.9 L13.2 3.9 Z" fill="#0b3540"/><path d="M2 9.2 L5.3 12.5 L0.2 14 Z" fill="#0b3540"/><path d="M2.2 11 L3.4 12.2" stroke="#dfe8ea" stroke-width="0.7"/></svg>
<svg class="a" style="left:1601px;top:798.868px" width="9.3" height="8.8" viewBox="0 0 9.3 8.8"><path d="M0.9 0.9 L8.4 7.9 M8.4 0.9 L0.9 7.9" stroke="#ee2459" stroke-width="1.8" stroke-linecap="butt"/></svg>
<span class="t " style="left:96.50px;top:834.00px;font-size:16px;color:#1e2226;-webkit-text-stroke:0.2px #fff;transform:scaleX(1.0738)">Folder</span>
<span class="t " style="left:1040.80px;top:834.00px;font-size:16px;color:#1e2226;-webkit-text-stroke:0.2px #fff;transform:scaleX(1.0743)">Sim</span>
<div style="position:absolute;left:1559.1px;top:830.335px;width:31.6px;height:31.6px;background:#f8f9fa;border:1px solid #0b3540;border-radius:4px 0 0 4px"></div>
<div style="position:absolute;left:1590px;top:830.335px;width:31.9px;height:31.6px;background:#f8f9fa;border:1px solid #ee2459;border-radius:0 4px 4px 0"></div>
<svg class="a" style="left:1567.7px;top:839.135px" width="14.6" height="14" viewBox="0 0 14.6 14"><path d="M2.6 8.6 L9.5 1.7 L12.8 5 L5.9 11.9 Z" fill="#0b3540"/><path d="M4.9 9.6 L10.4 4.1" stroke="#c9d6d9" stroke-width="0.6"/><path d="M10.5 1.2 L11.6 0.3 Q12.4 -0.2 13.1 0.5 L14 1.4 Q14.6 2.1 14 2.9 L13.2 3.9 Z" fill="#0b3540"/><path d="M2 9.2 L5.3 12.5 L0.2 14 Z" fill="#0b3540"/><path d="M2.2 11 L3.4 12.2" stroke="#dfe8ea" stroke-width="0.7"/></svg>
<svg class="a" style="left:1601px;top:841.5350000000001px" width="9.3" height="8.8" viewBox="0 0 9.3 8.8"><path d="M0.9 0.9 L8.4 7.9 M8.4 0.9 L0.9 7.9" stroke="#ee2459" stroke-width="1.8" stroke-linecap="butt"/></svg>
<span class="t " style="left:96.50px;top:877.00px;font-size:16px;color:#1e2226;-webkit-text-stroke:0.2px #fff;transform:scaleX(1.1286)">Imobiliária</span>
<span class="t " style="left:1040.80px;top:877.00px;font-size:16px;color:#1e2226;-webkit-text-stroke:0.2px #fff;transform:scaleX(1.0743)">Sim</span>
<div style="position:absolute;left:1559.1px;top:873.002px;width:31.6px;height:31.6px;background:#f8f9fa;border:1px solid #0b3540;border-radius:4px 0 0 4px"></div>
<div style="position:absolute;left:1590px;top:873.002px;width:31.9px;height:31.6px;background:#f8f9fa;border:1px solid #ee2459;border-radius:0 4px 4px 0"></div>
<svg class="a" style="left:1567.7px;top:881.8019999999999px" width="14.6" height="14" viewBox="0 0 14.6 14"><path d="M2.6 8.6 L9.5 1.7 L12.8 5 L5.9 11.9 Z" fill="#0b3540"/><path d="M4.9 9.6 L10.4 4.1" stroke="#c9d6d9" stroke-width="0.6"/><path d="M10.5 1.2 L11.6 0.3 Q12.4 -0.2 13.1 0.5 L14 1.4 Q14.6 2.1 14 2.9 L13.2 3.9 Z" fill="#0b3540"/><path d="M2 9.2 L5.3 12.5 L0.2 14 Z" fill="#0b3540"/><path d="M2.2 11 L3.4 12.2" stroke="#dfe8ea" stroke-width="0.7"/></svg>
<svg class="a" style="left:1601px;top:884.202px" width="9.3" height="8.8" viewBox="0 0 9.3 8.8"><path d="M0.9 0.9 L8.4 7.9 M8.4 0.9 L0.9 7.9" stroke="#ee2459" stroke-width="1.8" stroke-linecap="butt"/></svg>
<span class="t " style="left:95.80px;top:920.00px;font-size:16px;color:#1e2226;-webkit-text-stroke:0.2px #fff;transform:scaleX(1.0832)">Jornal</span>
<span class="t " style="left:1040.80px;top:920.00px;font-size:16px;color:#1e2226;-webkit-text-stroke:0.2px #fff;transform:scaleX(1.0743)">Sim</span>
<div style="position:absolute;left:1559.1px;top:915.669px;width:31.6px;height:31.6px;background:#f8f9fa;border:1px solid #0b3540;border-radius:4px 0 0 4px"></div>
<div style="position:absolute;left:1590px;top:915.669px;width:31.9px;height:31.6px;background:#f8f9fa;border:1px solid #ee2459;border-radius:0 4px 4px 0"></div>
<svg class="a" style="left:1567.7px;top:924.4689999999999px" width="14.6" height="14" viewBox="0 0 14.6 14"><path d="M2.6 8.6 L9.5 1.7 L12.8 5 L5.9 11.9 Z" fill="#0b3540"/><path d="M4.9 9.6 L10.4 4.1" stroke="#c9d6d9" stroke-width="0.6"/><path d="M10.5 1.2 L11.6 0.3 Q12.4 -0.2 13.1 0.5 L14 1.4 Q14.6 2.1 14 2.9 L13.2 3.9 Z" fill="#0b3540"/><path d="M2 9.2 L5.3 12.5 L0.2 14 Z" fill="#0b3540"/><path d="M2.2 11 L3.4 12.2" stroke="#dfe8ea" stroke-width="0.7"/></svg>
<svg class="a" style="left:1601px;top:926.869px" width="9.3" height="8.8" viewBox="0 0 9.3 8.8"><path d="M0.9 0.9 L8.4 7.9 M8.4 0.9 L0.9 7.9" stroke="#ee2459" stroke-width="1.8" stroke-linecap="butt"/></svg>
<span class="t " style="left:96.50px;top:962.00px;font-size:16px;color:#1e2226;-webkit-text-stroke:0.2px #fff;transform:scaleX(1.1558)">Nenhum</span>
<span class="t " style="left:1040.80px;top:962.00px;font-size:16px;color:#1e2226;-webkit-text-stroke:0.2px #fff;transform:scaleX(1.0743)">Sim</span>
<div style="position:absolute;left:1559.1px;top:958.336px;width:31.6px;height:31.6px;background:#f8f9fa;border:1px solid #0b3540;border-radius:4px 0 0 4px"></div>
<div style="position:absolute;left:1590px;top:958.336px;width:31.9px;height:31.6px;background:#f8f9fa;border:1px solid #ee2459;border-radius:0 4px 4px 0"></div>
<svg class="a" style="left:1567.7px;top:967.136px" width="14.6" height="14" viewBox="0 0 14.6 14"><path d="M2.6 8.6 L9.5 1.7 L12.8 5 L5.9 11.9 Z" fill="#0b3540"/><path d="M4.9 9.6 L10.4 4.1" stroke="#c9d6d9" stroke-width="0.6"/><path d="M10.5 1.2 L11.6 0.3 Q12.4 -0.2 13.1 0.5 L14 1.4 Q14.6 2.1 14 2.9 L13.2 3.9 Z" fill="#0b3540"/><path d="M2 9.2 L5.3 12.5 L0.2 14 Z" fill="#0b3540"/><path d="M2.2 11 L3.4 12.2" stroke="#dfe8ea" stroke-width="0.7"/></svg>
<svg class="a" style="left:1601px;top:969.5360000000001px" width="9.3" height="8.8" viewBox="0 0 9.3 8.8"><path d="M0.9 0.9 L8.4 7.9 M8.4 0.9 L0.9 7.9" stroke="#ee2459" stroke-width="1.8" stroke-linecap="butt"/></svg>
<span class="t " style="left:96.00px;top:1005.00px;font-size:16px;color:#1e2226;-webkit-text-stroke:0.2px #fff;transform:scaleX(1.1121)">Outros</span>
<span class="t " style="left:1040.80px;top:1005.00px;font-size:16px;color:#1e2226;-webkit-text-stroke:0.2px #fff;transform:scaleX(1.0743)">Sim</span>
<div style="position:absolute;left:1559.1px;top:1001.003px;width:31.6px;height:31.6px;background:#f8f9fa;border:1px solid #0b3540;border-radius:4px 0 0 4px"></div>
<div style="position:absolute;left:1590px;top:1001.003px;width:31.9px;height:31.6px;background:#f8f9fa;border:1px solid #ee2459;border-radius:0 4px 4px 0"></div>
<svg class="a" style="left:1567.7px;top:1009.803px" width="14.6" height="14" viewBox="0 0 14.6 14"><path d="M2.6 8.6 L9.5 1.7 L12.8 5 L5.9 11.9 Z" fill="#0b3540"/><path d="M4.9 9.6 L10.4 4.1" stroke="#c9d6d9" stroke-width="0.6"/><path d="M10.5 1.2 L11.6 0.3 Q12.4 -0.2 13.1 0.5 L14 1.4 Q14.6 2.1 14 2.9 L13.2 3.9 Z" fill="#0b3540"/><path d="M2 9.2 L5.3 12.5 L0.2 14 Z" fill="#0b3540"/><path d="M2.2 11 L3.4 12.2" stroke="#dfe8ea" stroke-width="0.7"/></svg>
<svg class="a" style="left:1601px;top:1012.2030000000001px" width="9.3" height="8.8" viewBox="0 0 9.3 8.8"><path d="M0.9 0.9 L8.4 7.9 M8.4 0.9 L0.9 7.9" stroke="#ee2459" stroke-width="1.8" stroke-linecap="butt"/></svg>
<svg class="a" style="left:1829px;top:910.8px" width="50" height="50" viewBox="0 0 50 50"><circle cx="25" cy="25" r="25" fill="#0a3522"/><path d="M34 22.4 C38 23.2 40 25.8 40 28.2 C40 29.8 39.3 31.2 38.2 32.2 L39.8 35 L36 33.8 C34.8 34.4 33.4 34.7 32 34.7 C28.6 34.7 25.6 33.2 24.6 31 C30 30.6 34 27 34 22.4 Z" fill="#fff"/><path d="M21.4 13 C26.9 13 31.4 16.5 31.4 20.9 C31.4 25.3 26.9 28.8 21.4 28.8 C19.9 28.8 18.5 28.5 17.2 28.1 L12 29.8 L13.8 26.2 C12.3 24.8 11.4 22.9 11.4 20.9 C11.4 16.5 15.9 13 21.4 13 Z" fill="#fff"/></svg>
</div></body></html>
